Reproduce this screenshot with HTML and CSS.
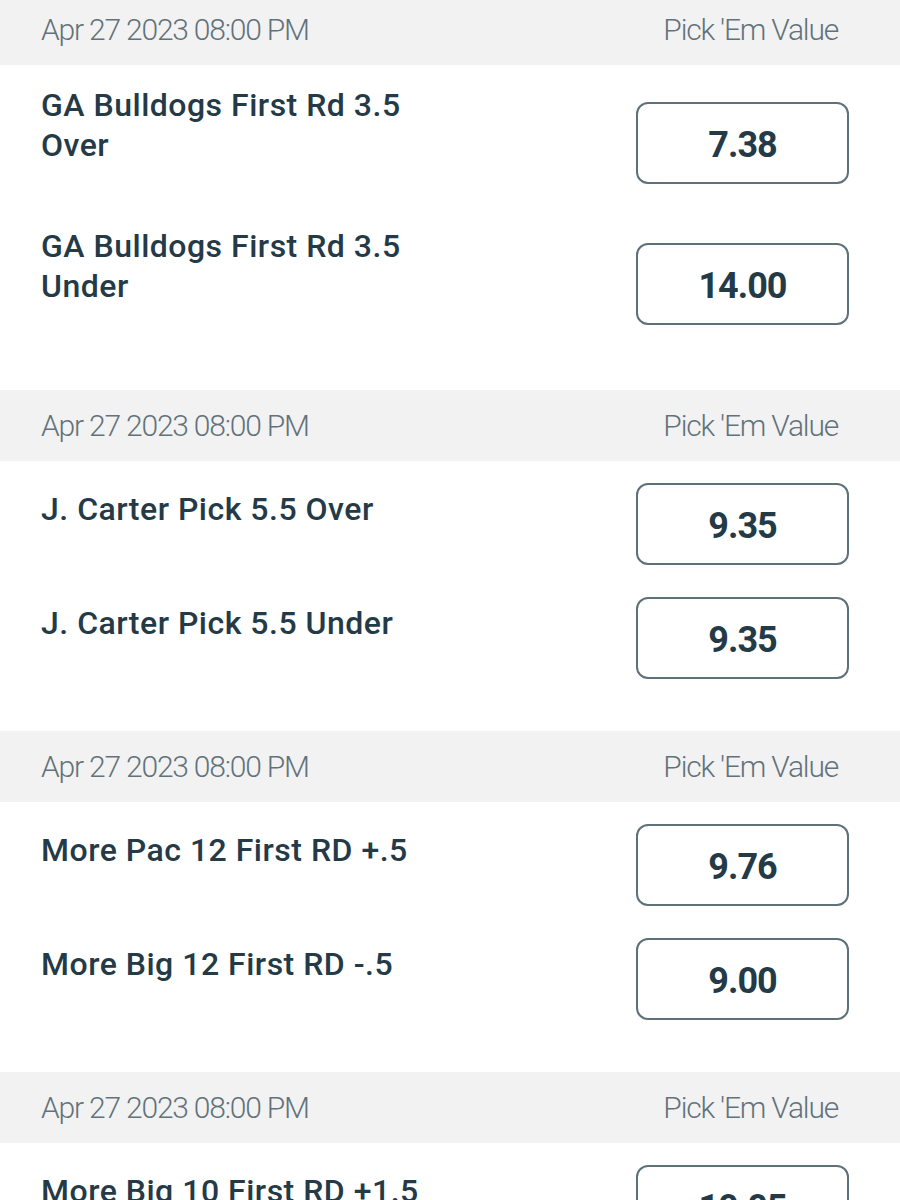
FILE: index.html
```html
<!DOCTYPE html>
<html>
<head>
    <title>Pick 'Em</title>
    <link rel="stylesheet" href="styles.css">
</head>
<body>
    <div class="event-list">
        <div class="event">
            <div class="event-header">
                <span>Apr 27 2023 08:00 PM</span>
                <span>Pick 'Em Value</span>
            </div>
            <div class="markets markets-tall">
                <div class="market">
                    <div class="market-name">GA Bulldogs First Rd 3.5 Over</div>
                    <button class="market-value">7.38</button>
                </div>
                <div class="market">
                    <div class="market-name">GA Bulldogs First Rd 3.5 Under</div>
                    <button class="market-value">14.00</button>
                </div>
            </div>
        </div>

        <div class="event">
            <div class="event-header">
                <span>Apr 27 2023 08:00 PM</span>
                <span>Pick 'Em Value</span>
            </div>
            <div class="markets">
                <div class="market">
                    <div class="market-name">J. Carter Pick 5.5 Over</div>
                    <button class="market-value">9.35</button>
                </div>
                <div class="market">
                    <div class="market-name">J. Carter Pick 5.5 Under</div>
                    <button class="market-value">9.35</button>
                </div>
            </div>
        </div>

        <div class="event">
            <div class="event-header">
                <span>Apr 27 2023 08:00 PM</span>
                <span>Pick 'Em Value</span>
            </div>
            <div class="markets">
                <div class="market">
                    <div class="market-name">More Pac 12 First RD +.5</div>
                    <button class="market-value">9.76</button>
                </div>
                <div class="market">
                    <div class="market-name">More Big 12 First RD -.5</div>
                    <button class="market-value">9.00</button>
                </div>
            </div>
        </div>

        <div class="event">
            <div class="event-header">
                <span>Apr 27 2023 08:00 PM</span>
                <span>Pick 'Em Value</span>
            </div>
            <div class="markets">
                <div class="market">
                    <div class="market-name">More Big 10 First RD +1.5</div>
                    <button class="market-value">10.05</button>
                </div>
                <div class="market">
                    <div class="market-name">More Big 10 First RD -1.5</div>
                    <button class="market-value">8.50</button>
                </div>
            </div>
        </div>
    </div>
</body>
</html>
```

FILE: styles.css
```css
body {
    margin: 0;
    background: #ffffff;
    font-family: Roboto, "Liberation Sans", sans-serif;
    color: #243a47;
}
.event-list {
    margin-top: -6px;
}
.event-header {
    display: flex;
    justify-content: space-between;
    align-items: center;
    height: 71px;
    padding: 0 62px 0 41px;
    background: #f2f2f2;
    color: #62727b;
    font-size: 30px;
    font-weight: 300;
    letter-spacing: -1.2px;
}
.markets {
    display: flex;
    flex-direction: column;
    gap: 32px;
    padding: 22px 0 52px;
}
.market {
    display: flex;
    justify-content: space-between;
    align-items: flex-start;
    padding: 0 51px 0 41px;
}
.market-name {
    max-width: 385px;
    padding-top: 6px;
    font-size: 32px;
    font-weight: 500;
    line-height: 40px;
    letter-spacing: 0.5px;
}
.market-value {
    flex: none;
    width: 213px;
    height: 82px;
    padding: 4px 0 0;
    border: 2px solid #5e7078;
    border-radius: 12px;
    background: #ffffff;
    color: #243a47;
    font-family: Roboto, "Liberation Sans", sans-serif;
    font-size: 36px;
    font-weight: 700;
    letter-spacing: -1px;
    cursor: pointer;
}
/* first event has names wrapping onto two lines */
.markets-tall {
    gap: 42px;
    padding: 20px 0 65px;
}
.markets-tall .market-name {
    padding-top: 0;
}
.markets-tall .market-value {
    margin-top: 17px;
}
```
